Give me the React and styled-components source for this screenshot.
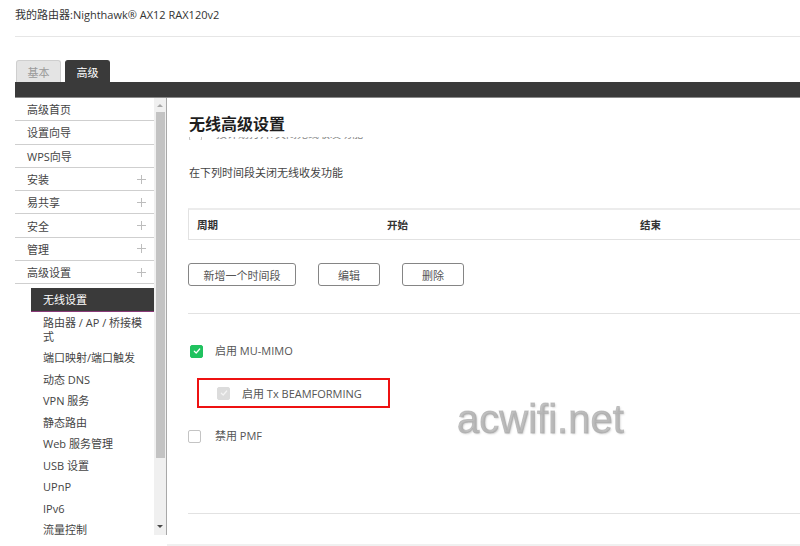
import React from 'react';
import styled, { createGlobalStyle } from 'styled-components';

const Global = createGlobalStyle`
  html, body { margin: 0; padding: 0; background: #fff; }
  body { font-family: "Open Sans", "Noto Sans CJK SC", sans-serif; color: #444; }
  * { box-sizing: border-box; }
`;

const Page = styled.div`
  width: 800px;
  height: 546px;
  overflow: hidden;
  padding-left: 15px;
  position: relative;
`;

const Header = styled.div`
  height: 37px;
  padding-top: 8px;
  font-size: 11px;
  line-height: 14px;
  color: #333;
  border-bottom: 1px solid #e6e6e6;
`;

const TabRow = styled.div`
  display: flex;
  gap: 4px;
  margin-top: 23px;
  padding-left: 1px;
  height: 22px;
`;

const Tab = styled.div`
  width: 45px;
  height: 22px;
  border-radius: 3px 3px 0 0;
  font-size: 11px;
  display: flex;
  align-items: center;
  justify-content: center;
  background: ${p => (p.$active ? '#3a3a3a' : '#e4e4e4')};
  color: ${p => (p.$active ? '#fff' : '#9a9a9a')};
  border: 1px solid ${p => (p.$active ? '#3a3a3a' : '#cfcfcf')};
  border-bottom: none;
`;

const DarkBar = styled.div`
  height: 16px;
  background: #3a3a3a;
  border-bottom: 1px solid #8a8a8a;
`;

const Main = styled.div`
  display: flex;
  height: 448px;
`;

const Sidebar = styled.div`
  display: flex;
  height: 437px;
  border-right: 1px solid #a8a8a8;
  flex: none;
`;

const MenuList = styled.div`
  width: 139px;
  overflow: hidden;
`;

const MenuItem = styled.div`
  height: 23.3px;
  border-bottom: 1px solid #cfcfcf;
  padding-left: 12px;
  padding-right: 8px;
  display: flex;
  align-items: center;
  justify-content: space-between;
  font-size: 11px;
  color: #444;
`;

const Plus = styled.span`
  width: 9px;
  height: 9px;
  position: relative;
  &::before, &::after {
    content: '';
    position: absolute;
    background: #bdbdbd;
  }
  &::before { left: 0; right: 0; top: 4px; height: 1px; }
  &::after { top: 0; bottom: 0; left: 4px; width: 1px; }
`;

const SubMenu = styled.div`
  margin-top: 4px;
  margin-left: 16px;
`;

const SubItem = styled.div`
  padding: ${p => (p.$active ? '0 0 0 12px' : '4px 8px 4px 12px')};
  height: ${p => (p.$active ? '24px' : 'auto')};
  display: flex;
  align-items: center;
  font-size: 11px;
  line-height: 13.5px;
  color: ${p => (p.$active ? '#fff' : '#444')};
  background: ${p => (p.$active ? '#3a3a3a' : 'transparent')};
  border-bottom: ${p => (p.$active ? '1px solid #8a3a78' : 'none')};
`;

const ScrollTrack = styled.div`
  width: 12px;
  background: #f0f0f0;
  display: flex;
  flex-direction: column;
  align-items: center;
  padding-bottom: 2px;
`;

const ScrollArrow = styled.div`
  height: 14px;
  width: 100%;
  display: flex;
  align-items: center;
  justify-content: center;
  &::after {
    content: '';
    border-left: 3px solid transparent;
    border-right: 3px solid transparent;
    ${p => (p.$down
      ? 'border-top: 3px solid #4a4a4a;'
      : 'border-bottom: 3px solid #a8a8a8;')}
  }
`;

const ScrollThumb = styled.div`
  width: 9px;
  height: 346px;
  background: #c3c3c3;
`;

const Spacer = styled.div`
  flex: 1;
`;

const Content = styled.div`
  flex: 1;
  padding-left: 21px;
  overflow: hidden;
  position: relative;
`;

const Title = styled.h1`
  margin: 15px 0 0 1px;
  font-size: 16px;
  line-height: 20px;
  font-weight: 700;
  color: #1e1e1e;
  font-family: "Noto Sans CJK SC", sans-serif;
`;

const Clipped = styled.div`
  height: 3px;
  margin-top: 4px;
  overflow: hidden;
`;

const ClippedInner = styled.div`
  margin-top: -10px;
  display: flex;
  align-items: center;
  gap: 14px;
  padding-left: 1px;
  font-size: 11px;
  line-height: 14px;
  color: #888;
`;

const Desc = styled.div`
  margin: 26px 0 0 1px;
  font-size: 11px;
  line-height: 14px;
  color: #444;
`;

const Table = styled.div`
  margin-top: 28px;
  width: 700px;
  height: 32px;
  border: 1px solid #e2e2e2;
  border-top: 2px solid #ececec;
  display: grid;
  grid-template-columns: 190px 253px 1fr;
  align-items: center;
  padding-left: 8px;
  font-size: 10.5px;
  font-weight: 700;
  color: #333;
`;

const ButtonRow = styled.div`
  display: flex;
  gap: 22px;
  margin-top: 23px;
`;

const Button = styled.button`
  height: 23px;
  width: ${p => p.$w}px;
  border: 1px solid #858585;
  border-radius: 3px;
  background: #fff;
  font-family: "Noto Sans CJK SC", sans-serif;
  font-size: 11px;
  color: #555;
  padding: 0;
`;

const Divider = styled.div`
  height: 1px;
  background: #e2e2e2;
  margin-top: ${p => p.$mt}px;
`;

const CheckRow = styled.div`
  display: flex;
  align-items: center;
  gap: ${p => p.$gap}px;
  margin-top: ${p => p.$mt}px;
  margin-left: ${p => p.$ml || 0}px;
  font-size: 11px;
  line-height: 14px;
  color: #555;
`;

const Box = styled.span`
  width: 13px;
  height: 13px;
  border-radius: 2px;
  flex: none;
  display: flex;
  align-items: center;
  justify-content: center;
  background: ${p => (p.$state === 'on' ? '#20c25f' : p.$state === 'dis' ? '#dcdcdc' : '#fff')};
  border: 1px solid ${p => (p.$state === 'on' ? '#20c25f' : p.$state === 'dis' ? '#dcdcdc' : '#c4c4c4')};
`;

const Highlight = styled.div`
  margin: 20px 0 0 9px;
  width: 193px;
  height: 30px;
  border: 2px solid #ee1111;
  display: flex;
  align-items: center;
  padding-left: 18px;
  gap: 12px;
  font-size: 11px;
  color: #555;
`;

const Watermark = styled.div`
  position: absolute;
  left: 290px;
  top: 299px;
  font-family: "Liberation Sans", sans-serif;
  font-size: 40px;
  color: rgba(165, 165, 165, 0.6);
  -webkit-text-stroke: 0.9px rgba(165, 165, 165, 0.6);
  text-shadow: 1px 1px 2px rgba(140, 140, 140, 0.45);
  filter: blur(0.7px);
`;

const BottomStrip = styled.div`
  position: absolute;
  left: 167px;
  right: 0;
  bottom: 0;
  height: 2px;
  background: #f0f0f0;
`;

const Check = ({ color = '#fff' }) => (
  <svg width="8" height="8" viewBox="0 0 8 8">
    <path d="M1.3 4.2 L3.2 6 L6.7 2" fill="none" stroke={color} strokeWidth="1.2" strokeLinecap="round" strokeLinejoin="round" />
  </svg>
);

const mainItems = [
  ['高级首页', false],
  ['设置向导', false],
  ['WPS向导', false],
  ['安装', true],
  ['易共享', true],
  ['安全', true],
  ['管理', true],
  ['高级设置', true],
];

const subItems = [
  '路由器 / AP / 桥接模式',
  '端口映射/端口触发',
  '动态 DNS',
  'VPN 服务',
  '静态路由',
  'Web 服务管理',
  'USB 设置',
  'UPnP',
  'IPv6',
  '流量控制',
];

export default function App() {
  return (
    <>
      <Global />
      <Page>
        <Header>我的路由器:Nighthawk® AX12 RAX120v2</Header>
        <TabRow>
          <Tab>基本</Tab>
          <Tab $active>高级</Tab>
        </TabRow>
        <DarkBar />
        <Main>
          <Sidebar>
            <MenuList>
              {mainItems.map(([t, plus]) => (
                <MenuItem key={t}>
                  <span>{t}</span>
                  {plus && <Plus />}
                </MenuItem>
              ))}
              <SubMenu>
                <SubItem $active>无线设置</SubItem>
                {subItems.map(t => (
                  <SubItem key={t}>{t}</SubItem>
                ))}
              </SubMenu>
            </MenuList>
            <ScrollTrack>
              <ScrollArrow />
              <ScrollThumb />
              <Spacer />
              <ScrollArrow $down />
            </ScrollTrack>
          </Sidebar>
          <Content>
            <Title>无线高级设置</Title>
            <Clipped>
              <ClippedInner>
                <Box />
                <span>按计划打开/关闭无线收发功能</span>
              </ClippedInner>
            </Clipped>
            <Desc>在下列时间段关闭无线收发功能</Desc>
            <Table>
              <span>周期</span>
              <span>开始</span>
              <span>结束</span>
            </Table>
            <ButtonRow>
              <Button $w={108}>新增一个时间段</Button>
              <Button $w={62}>编辑</Button>
              <Button $w={62}>删除</Button>
            </ButtonRow>
            <Divider $mt={27} />
            <CheckRow $mt={30} $ml={2} $gap={12}>
              <Box $state="on"><Check /></Box>
              <span>启用 MU-MIMO</span>
            </CheckRow>
            <Highlight>
              <Box $state="dis"><Check color="#f4f4f4" /></Box>
              <span>启用 Tx BEAMFORMING</span>
            </Highlight>
            <CheckRow $mt={21} $gap={14}>
              <Box />
              <span>禁用 PMF</span>
            </CheckRow>
            <Divider $mt={70} />
            <Watermark>acwifi.net</Watermark>
          </Content>
        </Main>
        <BottomStrip />
      </Page>
    </>
  );
}
